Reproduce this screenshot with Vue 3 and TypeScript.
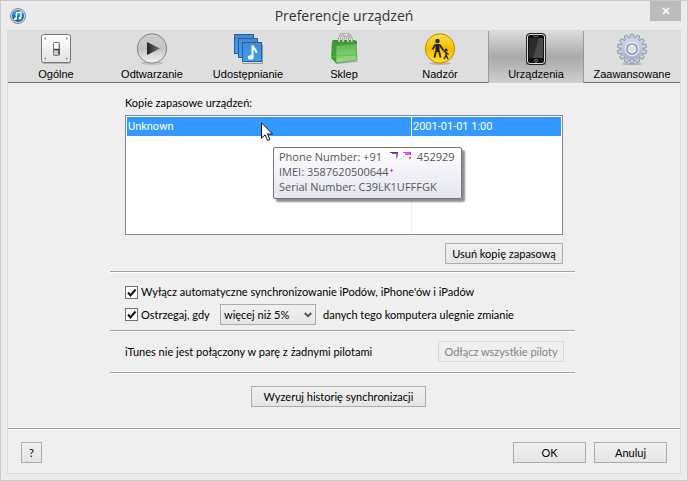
<script setup lang="ts">
import { ref } from 'vue'

type IconName = 'switch' | 'play' | 'share' | 'bag' | 'parental' | 'phone' | 'gear'
interface Tab {
  icon: IconName
  label: string
}

const tabs: Tab[] = [
  { icon: 'switch', label: 'Ogólne' },
  { icon: 'play', label: 'Odtwarzanie' },
  { icon: 'share', label: 'Udostępnianie' },
  { icon: 'bag', label: 'Sklep' },
  { icon: 'parental', label: 'Nadzór' },
  { icon: 'phone', label: 'Urządzenia' },
  { icon: 'gear', label: 'Zaawansowane' },
]
const active = ref<IconName>('phone')
const backups = [{ name: 'Unknown', date: '2001-01-01 1:00' }]
const disableSync = ref(true)
const warn = ref(true)
const threshold = ref('więcej niż 5%')
const teeth = Array.from({ length: 14 }, (_, i) => `rotate(${(i * 360) / 14} 16 16)`)
</script>

<template>
  <div class="window">
    <header class="titlebar">
      <svg class="app-icon" viewBox="0 0 16 16" aria-hidden="true">
        <circle cx="8" cy="8" r="7.5" fill="#d6d9dd" stroke="#85898e" />
        <circle cx="8" cy="8" r="6" fill="#1767b4" />
        <path d="M3 7a5 5 0 0 1 10 0Q8 9 3 7Z" fill="#3b8fd6" />
        <path d="M6.4 10.6V5l4.6-1v5.6" fill="none" stroke="#fff" stroke-width="1.3" />
        <circle cx="5.5" cy="10.8" r="1.5" fill="#fff" />
        <circle cx="10" cy="9.9" r="1.5" fill="#fff" />
      </svg>
      <h1>Preferencje urządzeń</h1>
      <button class="close" type="button" aria-label="Zamknij">
        <svg viewBox="0 0 8 8" aria-hidden="true"><path d="M1 1l6 6M7 1L1 7" stroke="#fff" stroke-width="1.6" /></svg>
      </button>
    </header>

    <main class="client">
      <nav class="toolbar">
        <button
          v-for="tab in tabs"
          :key="tab.icon"
          type="button"
          class="tab"
          :class="{ active: active === tab.icon }"
          @click="active = tab.icon"
        >
          <svg viewBox="0 0 32 32" aria-hidden="true">
            <defs>
              <linearGradient id="plate" x2="0" y2="1"><stop stop-color="#fff" /><stop offset="1" stop-color="#e2e2e2" /></linearGradient>
              <linearGradient id="silver" x2="0" y2="1"><stop stop-color="#cfcfcf" /><stop offset=".5" stop-color="#c2c2c2" /><stop offset="1" stop-color="#f4f4f4" /></linearGradient>
              <linearGradient id="tri" x2="1" y2="0"><stop stop-color="#222" /><stop offset="1" stop-color="#777" /></linearGradient>
              <linearGradient id="blue" x2="0" y2="1"><stop stop-color="#4a86cf" /><stop offset="1" stop-color="#3ba3ea" /></linearGradient>
              <linearGradient id="green" x2="0" y2="1"><stop stop-color="#4fb345" /><stop offset="1" stop-color="#9fdc86" /></linearGradient>
              <linearGradient id="gold" x2="0" y2="1"><stop stop-color="#ffe04a" /><stop offset=".5" stop-color="#f3bd00" /><stop offset="1" stop-color="#ffe02e" /></linearGradient>
              <linearGradient id="steel" x2="0" y2="1"><stop stop-color="#d3daea" /><stop offset="1" stop-color="#a5afc8" /></linearGradient>
            </defs>
            <g v-if="tab.icon === 'switch'">
              <rect x="2" y="3" width="29" height="28" rx="2" fill="#b5b5b5" />
              <rect x="1.5" y="1.5" width="29" height="28" rx="2" fill="url(#plate)" stroke="#777" />
              <path d="M4.500 5.500h1.500M26 5.500h1.500M4.500 25.500h1.500M26 25.500h1.500" stroke="#777" stroke-width="1.500" />
              <rect x="13.5" y="9.5" width="6" height="13" rx="1" fill="#c9c9c9" stroke="#777" />
              <rect x="14" y="10" width="4" height="6" fill="#fff" />
              <path d="M14 16.5h5v5" fill="none" stroke="#444" stroke-width="1.5" />
            </g>
            <g v-else-if="tab.icon === 'play'">
              <ellipse cx="16" cy="30" rx="11" ry="1.8" fill="#bdbdbd" />
              <circle cx="16" cy="15.5" r="14.7" fill="url(#silver)" stroke="#858585" />
              <path d="M11 9v13l13-6.5z" fill="url(#tri)" />
            </g>
            <g v-else-if="tab.icon === 'share'">
              <path d="M10 30.500h20.500v-19" fill="none" stroke="#999" />
              <rect x="2.500" y="1.500" width="19" height="19" fill="url(#blue)" stroke="#205fa9" />
              <rect x="6.500" y="5.500" width="19" height="19" fill="url(#blue)" stroke="#205fa9" />
              <rect x="10.500" y="9.500" width="19" height="19" fill="url(#blue)" stroke="#205fa9" />
              <path d="M20.500 24.500V12.500c1 4 4 3.500 4 7.500" fill="none" stroke="#fff" stroke-width="2" />
              <ellipse cx="18.700" cy="24.500" rx="2.800" ry="2.200" fill="#fff" />
            </g>
            <g v-else-if="tab.icon === 'bag'">
              <path d="M8 29l21-1 1 1-22 2z" fill="#aaa" />
              <path d="M4 7h22l3 1v3H8z" fill="#338f30" />
              <path d="M4 8l4 1v21l-5-5z" fill="#3c9c37" />
              <path d="M8 10l20-2 1 19-21 3z" fill="url(#green)" stroke="#3fa139" stroke-width=".7" />
              <path d="M8 10l20-2v3l-20 2z" fill="#2d8a2b" opacity=".55" />
              <path d="M8 23l20-1M3 24l5-1" stroke="#65bb55" />
              <path d="M11 9Q11 1 15.500 1T20 9M15 9Q15 2 19 1.500T24 9" fill="none" stroke="#888" stroke-width="2.200" />
              <path d="M11 9Q11 1 15.500 1T20 9M15 9Q15 2 19 1.500T24 9" fill="none" stroke="#f6f6f6" />
            </g>
            <g v-else-if="tab.icon === 'parental'">
              <ellipse cx="16" cy="30.500" rx="11" ry="1.500" fill="#b6b6b6" />
              <circle cx="16" cy="15.500" r="14.700" fill="url(#gold)" stroke="#bc8a08" />
              <circle cx="13.500" cy="8" r="2.200" fill="#28241a" />
              <path d="M11.500 11h4v8h-4z" fill="#28241a" />
              <path d="M11.500 11.500l-3 5M15.500 11.500l4 6M12 18l-1.500 6.500M15 18l1.500 6.500" fill="none" stroke="#28241a" stroke-width="1.800" />
              <circle cx="22" cy="17" r="1.600" fill="#28241a" />
              <path d="M19.500 18l2.500 1.500v3l-2 3.500M22 22l2 4M22 19.500l2.500 2" fill="none" stroke="#28241a" stroke-width="1.400" />
            </g>
            <g v-else-if="tab.icon === 'phone'">
              <ellipse cx="16" cy="31" rx="11" ry="1" fill="#777" />
              <rect x="6.500" y=".5" width="19" height="31" rx="3.500" fill="#111" stroke="#222" />
              <rect x="7.500" y="1.500" width="17" height="29" rx="2.500" fill="#111" stroke="#ddd" />
              <rect x="9" y="5" width="14" height="20" fill="#2c2c2c" />
              <path d="M19 5h4v20H13z" fill="#4a4a4a" />
              <path d="M13.500 3.500h5" stroke="#666" />
              <circle cx="16" cy="27.700" r="1.500" fill="#111" stroke="#aaa" stroke-width=".7" />
            </g>
            <g v-else>
              <ellipse cx="16" cy="31" rx="11" ry="1" fill="#b5b5b5" />
              <path v-for="t in teeth" :key="t" :transform="t" d="M13.700 6l.8-4.700h3l.8 4.700z" fill="#c6cee0" stroke="#7e89a4" stroke-width=".8" />
              <circle cx="16" cy="16" r="11" fill="url(#steel)" />
              <circle cx="16" cy="16" r="6.800" fill="#ccd3e2" stroke="#e8ecf5" />
              <circle cx="16" cy="16" r="5" fill="#dedede" stroke="#7984a0" stroke-width="1.200" />
              <circle cx="16" cy="16" r="3.700" fill="#dedede" stroke="#f4f6fb" />
            </g>
          </svg>
          <span>{{ tab.label }}</span>
        </button>
      </nav>

      <div class="content">
        <section class="group">
          <h2 id="backups-label">Kopie zapasowe urządzeń:</h2>
          <div class="listbox">
            <table aria-labelledby="backups-label">
              <tbody>
                <tr v-for="b in backups" :key="b.name" class="selected">
                  <td>{{ b.name }}</td>
                  <td class="date">{{ b.date }}</td>
                </tr>
                <tr class="filler" aria-hidden="true">
                  <td></td>
                  <td class="date"></td>
                </tr>
              </tbody>
            </table>
            <svg class="cursor" viewBox="0 0 12 19" aria-hidden="true">
              <path d="M.5.800v15.400l3.600-3.400 2.500 5.700 2.300-1-2.400-5.500h5z" fill="#fff" stroke="#111" />
            </svg>
            <div class="tooltip" role="tooltip">
              <p>
                Phone Number: +91
                <svg class="smudge" viewBox="0 0 32 10" aria-hidden="true">
                  <path d="M5 1h8v1H5z" fill="#453f75" />
                  <path d="M7 2h6v1H7z" fill="#77639c" />
                  <path d="M11 3h2v3h-2z" fill="#ef3df0" />
                  <path d="M11 6h1v2h-1z" fill="#ff9d36" />
                  <path d="M18 1h8v1h-8z" fill="#f03cf2" />
                  <path d="M20 2h5v2h-5z" fill="#e65af0" />
                  <path d="M25 2h1v2h-1z" fill="#4540b5" />
                  <path d="M16 7h1v1h-1zM18 5h1v1h-1z" fill="#62eee8" />
                  <path d="M24 6h2v2h-2z" fill="#f04a86" />
                </svg>452929
              </p>
              <p>IMEI: 3587620500644<svg class="speck" viewBox="0 0 5 9" aria-hidden="true"><path d="M1 3.500h3M2.500 2v3" stroke="#e83cf0" /></svg></p>
              <p>Serial Number: C39LK1UFFFGK</p>
            </div>
          </div>
          <div class="row end"><button class="btn" type="button">Usuń kopię zapasową</button></div>
        </section>

        <section class="group options">
          <div class="row check-row">
            <span class="tick">
              <input id="disable-sync" v-model="disableSync" type="checkbox" />
              <svg v-if="disableSync" viewBox="0 0 13 13" aria-hidden="true"><path d="M3 6.500l2.500 3L10.500 3.500" /></svg>
            </span>
            <label for="disable-sync">Wyłącz automatyczne synchronizowanie iPodów, iPhone'ów i iPadów</label>
          </div>
          <div class="row">
            <span class="tick">
              <input id="warn" v-model="warn" type="checkbox" />
              <svg v-if="warn" viewBox="0 0 13 13" aria-hidden="true"><path d="M3 6.500l2.500 3L10.500 3.500" /></svg>
            </span>
            <label for="warn" class="warn-label">Ostrzegaj, gdy</label>
            <span class="dropdown">
              <select id="threshold" v-model="threshold" aria-labelledby="warn-tail">
                <option>więcej niż 5%</option>
              </select>
              <svg viewBox="0 0 8 8" aria-hidden="true"><path d="M.800 2L4 5.200 7.200 2" /></svg>
            </span>
            <label id="warn-tail" for="threshold" class="warn-tail">danych tego komputera ulegnie zmianie</label>
          </div>
        </section>

        <section class="group remotes">
          <div class="row">
            <p>iTunes nie jest połączony w parę z żadnymi pilotami</p>
            <button class="btn wide" type="button" disabled>Odłącz wszystkie piloty</button>
          </div>
        </section>

        <section class="group reset">
          <button class="btn" type="button">Wyzeruj historię synchronizacji</button>
        </section>
      </div>

      <footer>
        <button class="btn help" type="button" aria-label="Pomoc">?</button>
        <button class="btn big" type="button">OK</button>
        <button class="btn big" type="button">Anuluj</button>
      </footer>
    </main>
  </div>
</template>

<style>
body {
  margin: 0;
}
</style>

<style scoped>
* {
  box-sizing: border-box;
}
.window {
  display: flex;
  flex-direction: column;
  min-height: 100vh;
  padding: 0 6px 6px;
  border: 1px solid #cbcbcb;
  background: #ebebeb;
  color: #000;
  font: 11px/14px Lato, 'Liberation Sans', sans-serif;
}
h1,
h2,
p {
  margin: 0;
  font: inherit;
}
button,
select {
  font: inherit;
  color: inherit;
}
.titlebar {
  display: grid;
  grid-template-columns: 31px 1fr 31px;
  align-items: center;
  height: 29px;
}
.app-icon {
  width: 16px;
  height: 16px;
  margin-left: 3px;
}
h1 {
  color: #333;
  font: 14px/20px 'Open Sans', 'Noto Sans', sans-serif;
  text-align: center;
}
.close {
  display: grid;
  place-items: center;
  align-self: start;
  height: 20px;
  padding: 0;
  border: 0;
  background: #bcbcbc;
}
.close svg {
  width: 8px;
  height: 8px;
}
.client {
  display: flex;
  flex: 1;
  flex-direction: column;
  border: 1px solid #d9d9d9;
  background: #efefef;
}
.toolbar {
  display: grid;
  grid-template-columns: repeat(7, 1fr);
  height: 52px;
  border-bottom: 1px solid #707070;
  background: #dedede;
}
.tab {
  display: flex;
  flex-direction: column;
  align-items: center;
  padding: 2px 0 0;
  border: 0;
  background: none;
  font: 11px/18px 'Liberation Sans', Arial, sans-serif;
}
.tab.active {
  border: solid #999;
  border-width: 0 1px;
  background: linear-gradient(#dcdcdc, #a9a9a9 50%, #cfcfcf);
}
.tab svg {
  width: 32px;
  height: 32px;
}
.content {
  flex: 1;
  padding: 13px 105px 0 102px;
}
.group {
  padding: 0 12px 7px 15px;
  border-bottom: 1px solid #a0a0a0;
  box-shadow: 0 1px #fff;
}
.row {
  display: flex;
  align-items: center;
  min-height: 21px;
}
.end {
  justify-content: flex-end;
  margin-top: 8px;
}
.listbox {
  position: relative;
  height: 120px;
  margin-top: 5px;
  padding: 1px;
  border: 1px solid #828790;
  background: #fff;
}
table {
  width: 100%;
  height: 100%;
  border-collapse: separate;
  border-spacing: 0;
  table-layout: fixed;
  font: 11px/14px Roboto, 'Liberation Sans', sans-serif;
}
td {
  padding: 0 1px;
}
.date {
  width: 150px;
  border-left: 1px solid #f0f0f0;
}
.selected {
  height: 19px;
  background: #3399ff;
  color: #fff;
}
.selected .date {
  border-color: #fff;
}
.cursor {
  position: absolute;
  left: 135px;
  top: 6px;
  width: 12px;
  height: 19px;
}
.tooltip {
  position: absolute;
  left: 147px;
  top: 31px;
  padding: 1px 6px 4px 5px;
  border: 1px solid #767676;
  border-radius: 2px;
  background: linear-gradient(#fff, #e4e5f0);
  box-shadow: 3px 3px 2px rgba(0, 0, 0, 0.45);
  color: #575757;
  font: 11px/15px 'Open Sans', 'Noto Sans', sans-serif;
  white-space: nowrap;
}
.smudge {
  width: 32px;
  height: 10px;
}
.speck {
  width: 5px;
  height: 9px;
}
.btn {
  height: 21px;
  padding: 0 8px;
  border: 1px solid #acacac;
  background: linear-gradient(#f0f0f0, #e5e5e5);
  white-space: nowrap;
}
.btn:disabled {
  border-color: #d9d9d9;
  background: #efefef;
  color: #838383;
}
.end .btn {
  min-width: 118px;
  padding: 0 5px;
}
.btn.wide {
  min-width: 126px;
  padding: 0 5px;
}
.options {
  padding: 12px 12px 5px 15px;
}
.check-row {
  min-height: 16px;
  margin-bottom: 4px;
}
.tick,
.dropdown {
  display: grid;
}
.tick > *,
.dropdown > * {
  grid-area: 1 / 1;
}
.tick input {
  appearance: none;
  width: 13px;
  height: 13px;
  margin: 0;
  border: 1px solid #707070;
  background: #fff;
}
.tick svg {
  width: 13px;
  height: 13px;
  pointer-events: none;
  fill: none;
  stroke: #111;
  stroke-width: 2;
}
.tick + label {
  margin-left: 3px;
}
.warn-label {
  width: 79px;
}
.dropdown select {
  appearance: none;
  width: 96px;
  height: 21px;
  padding: 0 18px 0 3px;
  border: 1px solid #acacac;
  border-radius: 0;
  background: linear-gradient(#f0f0f0, #e5e5e5);
}
.dropdown svg {
  place-self: center end;
  width: 8px;
  height: 8px;
  margin-right: 4px;
  pointer-events: none;
  fill: none;
  stroke: #555;
  stroke-width: 2;
}
.warn-tail {
  margin-left: 7px;
}
.remotes {
  padding: 10px 11px 10px 15px;
}
.remotes .row {
  justify-content: space-between;
}
.reset {
  display: flex;
  justify-content: center;
  padding: 13px 8px 14px 0;
  border: 0;
  box-shadow: none;
}
.reset .btn {
  min-width: 175px;
}
footer {
  display: flex;
  gap: 8px;
  padding: 13px 13px 10px;
  border-top: 1px solid #a0a0a0;
  box-shadow: inset 0 1px #fff;
}
.help {
  width: 21px;
  margin-right: auto;
  padding: 0;
}
.big {
  width: 73px;
}
</style>
